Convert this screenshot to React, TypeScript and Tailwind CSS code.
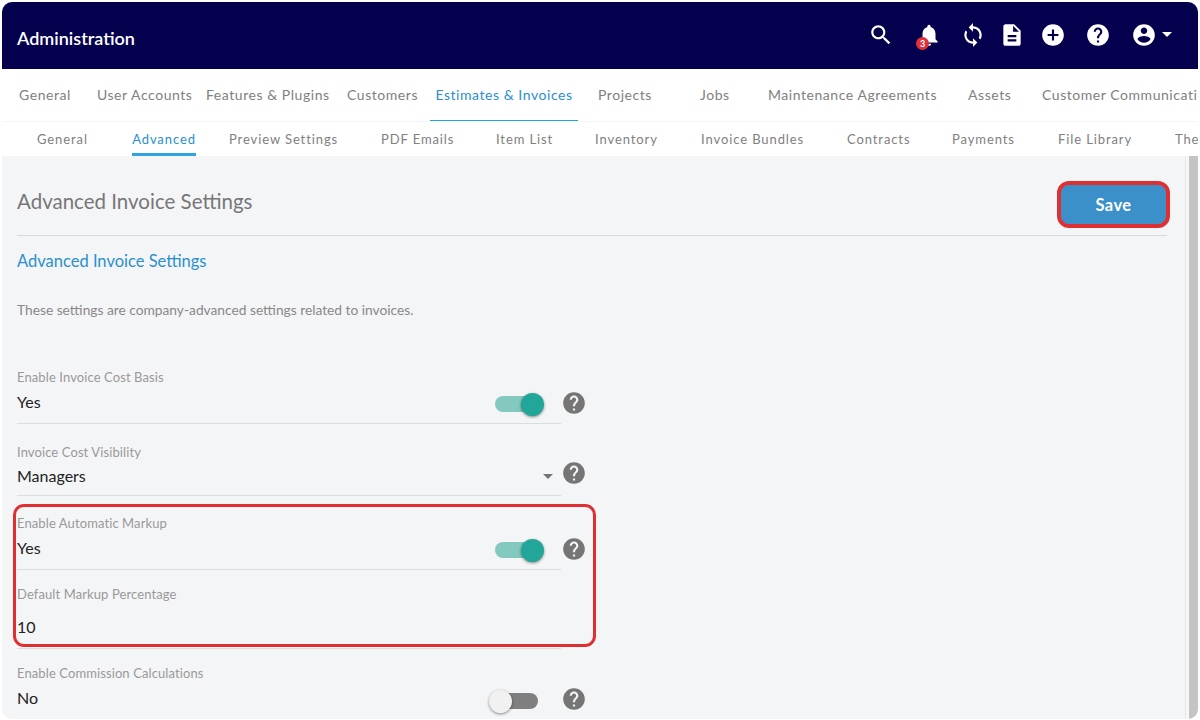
const ICONS = {
  search: "M15.5 14h-.79l-.28-.27C15.41 12.59 16 11.11 16 9.5 16 5.91 13.09 3 9.5 3S3 5.91 3 9.5 5.91 16 9.5 16c1.61 0 3.09-.59 4.23-1.57l.27.28v.79l5 4.99L20.49 19l-4.99-5zm-6 0C7.01 14 5 11.99 5 9.5S7.01 5 9.5 5 14 7.01 14 9.5 11.99 14 9.5 14z",
  bell: "M12 22c1.1 0 2-.9 2-2h-4c0 1.1.89 2 2 2zm6-6v-5c0-3.07-1.64-5.64-4.5-6.32V4c0-.83-.67-1.5-1.5-1.5s-1.5.67-1.5 1.5v.68C7.63 5.36 6 7.92 6 11v5l-2 2v1h16v-1l-2-2z",
  sync: "M12 4V1L8 5l4 4V6c3.31 0 6 2.69 6 6 0 1.01-.25 1.97-.7 2.8l1.46 1.46C19.54 15.03 20 13.57 20 12c0-4.42-3.58-8-8-8zm0 14c-3.31 0-6-2.69-6-6 0-1.01.25-1.97.7-2.8L5.24 7.74C4.46 8.97 4 10.43 4 12c0 4.42 3.58 8 8 8v3l4-4-4-4v3z",
  doc: "M14 2H6c-1.1 0-1.99.9-1.99 2L4 20c0 1.1.89 2 1.99 2H18c1.1 0 2-.9 2-2V8l-6-6zm2 16H8v-2h8v2zm0-4H8v-2h8v2zm-3-5V3.5L18.5 9H13z",
  add: "M12 2C6.48 2 2 6.48 2 12s4.48 10 10 10 10-4.48 10-10S17.52 2 12 2zm5 11h-4v4h-2v-4H7v-2h4V7h2v4h4v2z",
  help: "M12 2C6.48 2 2 6.48 2 12s4.48 10 10 10 10-4.48 10-10S17.52 2 12 2zm1 17h-2v-2h2v2zm2.07-7.75l-.9.92C13.45 12.9 13 13.5 13 15h-2v-.5c0-1.1.45-2.1 1.17-2.83l1.24-1.26c.37-.36.59-.86.59-1.41 0-1.1-.9-2-2-2s-2 .9-2 2H8c0-2.21 1.79-4 4-4s4 1.79 4 4c0 .88-.36 1.68-.93 2.25z",
  account: "M12 2C6.48 2 2 6.48 2 12s4.48 10 10 10 10-4.48 10-10S17.52 2 12 2zm0 3c1.66 0 3 1.34 3 3s-1.34 3-3 3-3-1.34-3-3 1.34-3 3-3zm0 14.2c-2.5 0-4.71-1.28-6-3.22.03-1.99 4-3.08 6-3.08 1.99 0 5.97 1.09 6 3.08-1.29 1.94-3.5 3.22-6 3.22z",
}

function Icon({ d, className }: { d: string; className: string }) {
  return (
    <svg viewBox="0 0 24 24" fill="currentColor" className={`w-[26px] h-[26px] shrink-0 ${className}`}>
      <path d={d} />
    </svg>
  )
}

const mainTabs = [
  { label: "General", cls: "w-[95px] pl-[17px]" },
  { label: "User Accounts", cls: "w-[109px]" },
  { label: "Features & Plugins", cls: "w-[141px]" },
  { label: "Customers", cls: "w-[83px]" },
  { label: "Estimates & Invoices", cls: "w-[148px] justify-center text-[#2a8fcf] border-b border-[#2a9fd6]" },
  { label: "Projects", cls: "w-[122px] pl-[20px]" },
  { label: "Jobs", cls: "w-[68px]" },
  { label: "Maintenance Agreements", cls: "w-[200px]" },
  { label: "Assets", cls: "w-[74px]" },
  { label: "Customer Communications", cls: "w-[200px]" },
]

const subTabs = [
  { label: "General", cls: "w-[130px] pl-[35px]" },
  { label: "Advanced", cls: "w-[64px] justify-center pt-[4px] text-[#2a8fcf] border-b-[3px] border-[#2fa4e0]" },
  { label: "Preview Settings", cls: "w-[185px] pl-[33px]" },
  { label: "PDF Emails", cls: "w-[115px]" },
  { label: "Item List", cls: "w-[99px]" },
  { label: "Inventory", cls: "w-[106px]" },
  { label: "Invoice Bundles", cls: "w-[146px]" },
  { label: "Contracts", cls: "w-[105px]" },
  { label: "Payments", cls: "w-[106px]" },
  { label: "File Library", cls: "w-[117px]" },
  { label: "Theme", cls: "w-[60px]" },
]

function Toggle({ on }: { on?: boolean }) {
  if (on) {
    return (
      <div className="relative w-[49px] h-[23px] mr-[17px] translate-y-[2px] flex items-center">
        <div className="w-[46px] h-[16px] rounded-full bg-[#84c9c0]" />
        <div className="absolute right-0 top-0 w-[23px] h-[23px] rounded-full bg-[#22a699] shadow-[0_1px_3px_rgba(0,0,0,0.45)]" />
      </div>
    )
  }
  return (
    <div className="relative w-[49px] h-[23px] mr-[23px] translate-y-[3px] flex items-center justify-end">
      <div className="w-[43px] h-[16px] rounded-full bg-[#7f7f7f]" />
      <div className="absolute left-0 top-0 w-[23px] h-[23px] rounded-full bg-[#f1f1f1] shadow-[0_1px_3px_rgba(0,0,0,0.45)]" />
    </div>
  )
}

function Field({
  label,
  value,
  height,
  gap,
  pad = "pb-[9px]",
  right,
  help,
  line = true,
}: {
  label: string
  value: string
  height: string
  gap: string
  pad?: string
  right?: React.ReactNode
  help?: string
  line?: boolean
}) {
  return (
    <div className={`flex items-end ${height}`}>
      <div className={`w-[544px] h-full flex flex-col justify-end ${line ? "border-b border-[#dcdcdc]" : ""}`}>
        <div className={`text-[13px] leading-[16px] tracking-[0.1px] text-[#999] ${gap}`}>{label}</div>
        <div className={`flex items-center justify-between ${pad}`}>
          <span className="text-[16px] leading-[24px] text-[#222]">{value}</span>
          {right}
        </div>
      </div>
      {help && <Icon d={ICONS.help} className={`text-[#757575] ${help}`} />}
    </div>
  )
}

export default function App() {
  return (
    <div className="w-[1200px] h-[720px] overflow-hidden bg-white pt-[2px] px-[2px] pb-[1px] font-['Lato','Noto_Sans',sans-serif]">
      <div className="w-full h-full rounded-[10px] overflow-hidden flex flex-col bg-[#f4f5f7]">
        <header className="h-[67px] shrink-0 bg-[#04004d] flex items-center justify-between pl-[15px] pr-[26px] text-white">
          <h1 className="mt-[5px] text-[18px] font-semibold">Administration</h1>
          <div className="flex items-center pb-[2px]">
            <Icon d={ICONS.search} className="" />
            <div className="relative ml-[22px]">
              <Icon d={ICONS.bell} className="" />
              <span className="absolute left-0 top-[15px] w-[13px] h-[13px] rounded-full bg-[#e0313a] text-white text-[9px] font-bold leading-[13px] text-center">3</span>
            </div>
            <Icon d={ICONS.sync} className="ml-[18px]" />
            <Icon d={ICONS.doc} className="ml-[13px]" />
            <Icon d={ICONS.add} className="ml-[15px]" />
            <Icon d={ICONS.help} className="ml-[19px]" />
            <Icon d={ICONS.account} className="ml-[20px]" />
            <div className="w-0 h-0 ml-[5px] border-x-[5px] border-x-transparent border-t-[5px] border-t-white" />
          </div>
        </header>

        <nav className="h-[52px] shrink-0 flex bg-white text-[14px] tracking-[0.55px] text-[#808080] overflow-hidden whitespace-nowrap">
          {mainTabs.map((t) => (
            <div key={t.label} className={`shrink-0 flex items-center pb-[1px] ${t.cls}`}>{t.label}</div>
          ))}
        </nav>
        <nav className="h-[35px] shrink-0 flex bg-white border-t border-[#f4f5f7] text-[13px] tracking-[0.9px] text-[#808080] overflow-hidden whitespace-nowrap">
          {subTabs.map((t) => (
            <div key={t.label} className={`shrink-0 flex items-center pt-[1px] ${t.cls}`}>{t.label}</div>
          ))}
        </nav>

        <div className="flex-1 min-h-0 flex">
          <main className="w-[1184px] pl-[15px] pr-[18px] border-r border-[#e8e8e8]">
            <div className="h-[80px] flex items-center justify-between border-b border-[#d9d9d9]">
              <h2 className="mt-[12px] text-[20.5px] text-[#777]">Advanced Invoice Settings</h2>
              <div className="relative mr-[1px] mt-[17px]">
                <button className="block w-[105px] h-[39px] pt-[2px] rounded-[6px] bg-[#3b90c9] text-white text-[16.5px] font-bold tracking-[0.4px]">Save</button>
                <div className="absolute -inset-[4px] rounded-[12px] border-[4px] border-[#e02f32]" />
              </div>
            </div>
            <div className="mt-[14px] text-[16.5px] leading-[22px] text-[#2a8fcf]">Advanced Invoice Settings</div>
            <p className="mt-[27px] text-[13.75px] leading-[22px] text-[#888]">These settings are company-advanced settings related to invoices.</p>

            <div className="mt-[31px]">
              <Field label="Enable Invoice Cost Basis" value="Yes" height="h-[72px]" gap="mb-[5px]" right={<Toggle on />} help="mb-[8px]" />
              <Field label="Invoice Cost Visibility" value="Managers" height="h-[72px]" gap="mb-[4px]" pad="pb-[7px]" right={<div className="w-0 h-0 mr-[8px] border-x-[5px] border-x-transparent border-t-[5px] border-t-[#757575]" />} help="mb-[10px]" />
              <div className="relative">
                <Field label="Enable Automatic Markup" value="Yes" height="h-[74px]" gap="mb-[5px]" right={<Toggle on />} help="mb-[8px]" />
                <Field label="Default Markup Percentage" value="10" height="h-[79px]" gap="mb-[13px]" />
                <div className="absolute left-[-4px] top-[8px] bottom-[2px] w-[583px] rounded-[11px] border-[3px] border-[#e02f32]" />
              </div>
              <Field label="Enable Commission Calculations" value="No" height="h-[70px]" gap="mb-[5px]" right={<Toggle />} help="mb-[7px]" line={false} />
            </div>
          </main>
          <div className="flex-1 bg-[#f7f7f7] pl-[3px]">
            <div className="h-full bg-[#c4c4c4]" />
          </div>
        </div>
      </div>
    </div>
  )
}
